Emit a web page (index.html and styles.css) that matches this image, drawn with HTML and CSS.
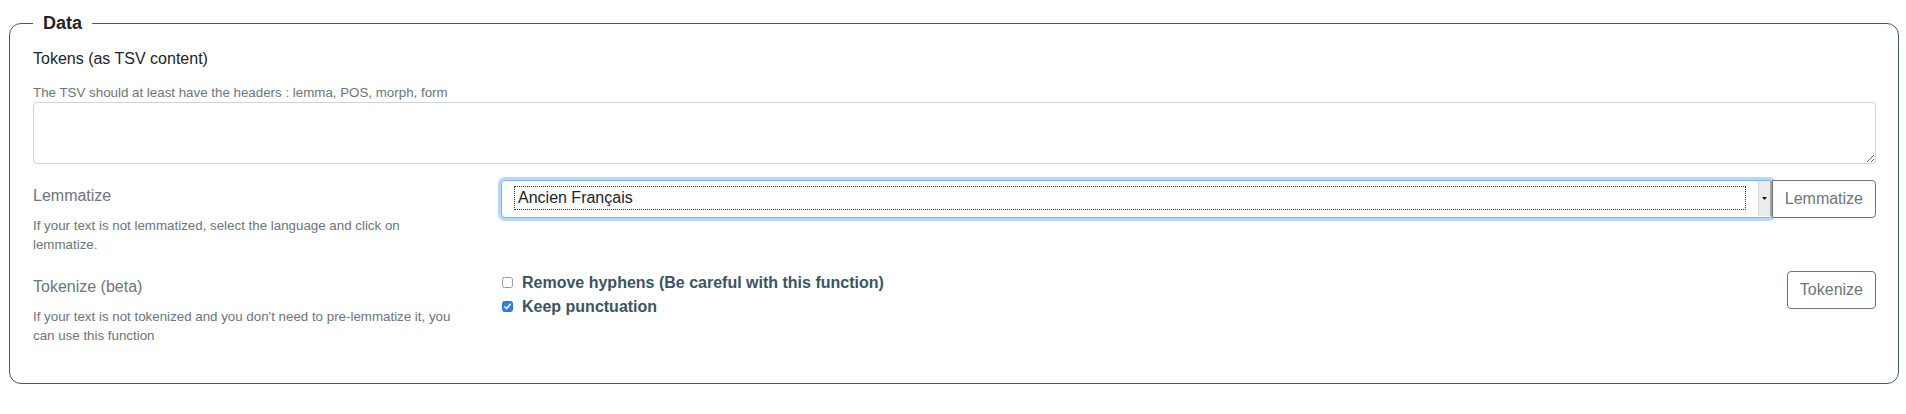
FILE: index.html
```html
<!DOCTYPE html>
<html lang="en">
<head>
<meta charset="utf-8">
<title>Data</title>
<link rel="stylesheet" href="styles.css">
</head>
<body>
<fieldset class="panel">
  <legend class="panel-title">Data</legend>

  <div class="group">
    <label class="label" for="tokens">Tokens (as TSV content)</label>
    <small class="hint">The TSV should at least have the headers : lemma, POS, morph, form</small>
    <textarea id="tokens" class="textarea" rows="2"></textarea>
  </div>

  <div class="row row-lemma">
    <div class="side">
      <div class="side-label">Lemmatize</div>
      <small class="hint desc">If your text is not lemmatized, select the language and click on lemmatize.</small>
    </div>
    <div class="main">
      <div class="input-group">
        <div class="select" role="combobox" aria-expanded="false">
          <span class="select-value">Ancien Français</span>
          <span class="select-arrow"><svg width="5" height="3" viewBox="0 0 5 3"><path d="M0 0h5L2.5 3z" fill="#111"/></svg></span>
        </div>
        <button class="btn btn-attached" type="button">Lemmatize</button>
      </div>
    </div>
  </div>

  <div class="row row-token">
    <div class="side">
      <div class="side-label">Tokenize (beta)</div>
      <small class="hint desc">If your text is not tokenized and you don't need to pre-lemmatize it, you can use this function</small>
    </div>
    <div class="main main-token">
      <div class="checks">
        <label class="check"><span class="box"></span>Remove hyphens (Be careful with this function)</label>
        <label class="check"><span class="box box-checked"><svg width="9" height="9" viewBox="0 0 9 9"><path d="M1.8 4.8 3.7 6.6 7.3 2.3" fill="none" stroke="#fff" stroke-width="1.5" stroke-linecap="round" stroke-linejoin="round"/></svg></span>Keep punctuation</label>
      </div>
      <button class="btn" type="button">Tokenize</button>
    </div>
  </div>
</fieldset>
</body>
</html>
```

FILE: styles.css
```css
* { box-sizing: border-box; }

html, body {
  margin: 0;
  padding: 0;
  background: #fff;
}

body {
  font-family: "Liberation Sans", Arial, Helvetica, sans-serif;
  font-size: 16px;
  line-height: 24px;
  color: #212529;
}

.panel {
  margin: 10px 7px 0 9px;
  padding: 10px 22px 38px 23px;
  border: 1px solid #3e5c6b;
  border-radius: 12px;
  min-width: 0;
}

.panel-title {
  padding: 0 10px;
  font-size: 18px;
  line-height: 27px;
  font-weight: bold;
  color: #1f2326;
}

.group {
  display: flex;
  flex-direction: column;
  margin-bottom: 16px;
}

.label {
  display: block;
  margin-bottom: 8px;
  color: #212529;
}

.hint {
  display: block;
  font-size: 13.33px;
  line-height: 19.2px;
  color: #6c757d;
}

.group .hint { margin-top: 4px; }

.desc { max-width: 430px; }

.textarea {
  display: block;
  width: 100%;
  height: 62px;
  margin: 0;
  padding: 6px 12px;
  border: 1px solid #ced4da;
  border-radius: 4px;
  font: inherit;
  color: #495057;
  resize: vertical;
  background: #fff;
}

.row {
  display: grid;
  grid-template-columns: 438px 1fr;
  column-gap: 30px;
  align-items: start;
}

.row-lemma { margin-bottom: 16px; }

.side-label {
  padding-top: 4px;
  margin-bottom: 8px;
  color: #6c757d;
}

.input-group {
  display: flex;
  align-items: stretch;
}

.select {
  flex: 1;
  display: flex;
  align-items: stretch;
  height: 38px;
  border: 1px solid #7fb3ee;
  border-radius: 4px;
  box-shadow: 0 0 0 3px #b9d7fb;
  background: #fff;
}

.select-value {
  flex: 1;
  margin: 5px 12px 7px 12px;
  padding: 0 3px;
  border: 1px dotted #333;
  line-height: 22px;
  color: #212529;
}

.select-arrow {
  width: 14px;
  margin-bottom: 1px;
  display: flex;
  align-items: center;
  justify-content: center;
  background: #ececec;
  border-left: 1px solid #d6d6d6;
  border-right: 2px solid #a3a3a3;
}

.btn {
  height: 38px;
  padding: 0 12px;
  border: 1px solid #6c757d;
  border-radius: 4px;
  background: #fff;
  font: inherit;
  font-size: 16px;
  line-height: 24px;
  color: #6c757d;
  cursor: pointer;
}

.btn-attached {
  border-top-left-radius: 0;
  border-bottom-left-radius: 0;
  margin-left: -1px;
  position: relative;
}

.main-token {
  display: flex;
  justify-content: space-between;
  align-items: flex-start;
}

.checks {
  display: flex;
  flex-direction: column;
}

.check {
  display: flex;
  align-items: center;
  font-weight: bold;
  color: #3b5367;
  line-height: 24px;
}

.box {
  width: 11px;
  height: 11px;
  margin-left: 1px;
  margin-right: 9px;
  border: 1px solid #9a9a9a;
  border-radius: 2.5px;
  background: #fff;
  display: flex;
  align-items: center;
  justify-content: center;
}

.box-checked {
  background: #2f80ed;
  border-color: #2a74d8;
}
```
